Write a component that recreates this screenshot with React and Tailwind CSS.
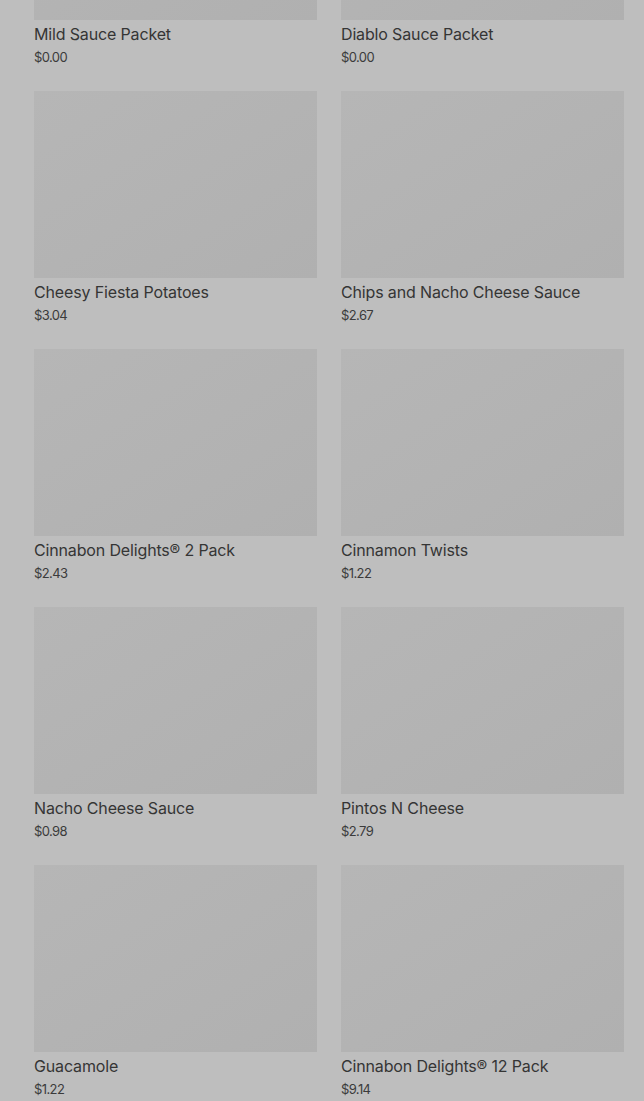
const items = [
  { name: 'Mild Sauce Packet', price: '$0.00' },
  { name: 'Diablo Sauce Packet', price: '$0.00' },
  { name: 'Cheesy Fiesta Potatoes', price: '$3.04' },
  { name: 'Chips and Nacho Cheese Sauce', price: '$2.67' },
  { name: 'Cinnabon Delights® 2 Pack', price: '$2.43' },
  { name: 'Cinnamon Twists', price: '$1.22' },
  { name: 'Nacho Cheese Sauce', price: '$0.98' },
  { name: 'Pintos N Cheese', price: '$2.79' },
  { name: 'Guacamole', price: '$1.22' },
  { name: 'Cinnabon Delights® 12 Pack', price: '$9.14' },
];

function ProductCard({ item }) {
  return (
    <div className="flex flex-col">
      <div className="h-[187px] bg-gradient-to-br from-[#b6b6b6] to-[#b0b0b0]" />
      <p className="mt-[4px] text-[16px] leading-[20px] tracking-[-0.15px] text-[#353535]">{item.name}</p>
      <p className="mt-[4px] text-[13px] leading-[18px] tracking-[-0.6px] text-[#3b3b3b]">{item.price}</p>
    </div>
  );
}

export default function App() {
  return (
    <div className="min-h-screen overflow-hidden bg-[#bebebe]" style={{ fontFamily: 'Inter, "Noto Sans", sans-serif' }}>
      {/* page is scrolled: first row sits partly above the fold */}
      <div className="-mt-[167px] pl-[34px] pr-[20px] pb-6 grid grid-cols-2 gap-x-[24px] gap-y-[25px]">
        {items.map((item) => (
          <ProductCard key={item.name} item={item} />
        ))}
      </div>
    </div>
  );
}
